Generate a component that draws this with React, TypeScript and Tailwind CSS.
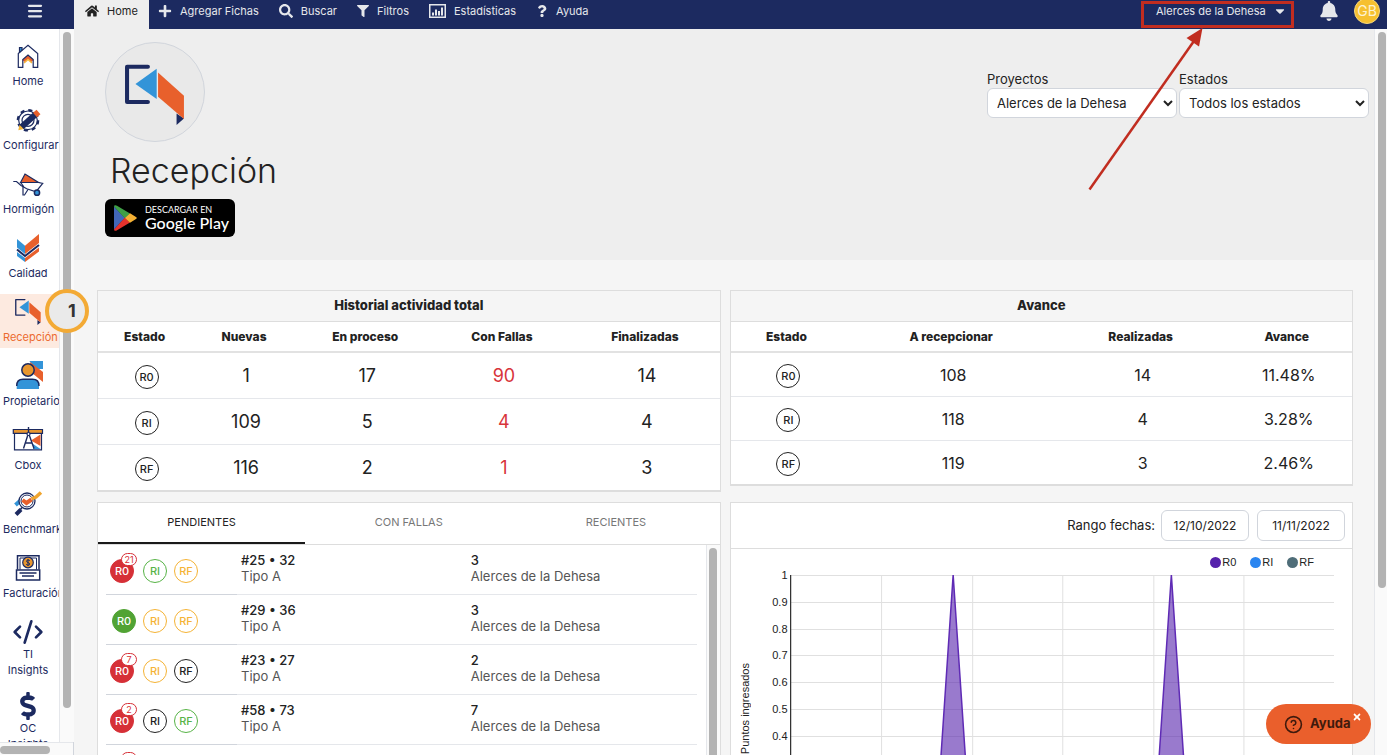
import type { ReactNode } from 'react'
import { CircleHelp, CodeXml, Menu } from 'lucide-react'
import { FaBell, FaCaretDown, FaDollarSign, FaFilter, FaHome, FaPlus, FaQuestion, FaSearch, FaTimes } from 'react-icons/fa'

const NAVY = '#1c2a60'
const ORANGE = '#e8602c'
const BLUE = '#3394d8'
const AMBER = '#e8962e'

interface LogoProps {
  className?: string
  lineWidth: number
}

function RecepcionLogo({ className, lineWidth }: LogoProps) {
  return (
    <svg viewBox="370 190 190 190" className={className} aria-hidden="true">
      <path d="M444 201H382V306H444" fill="none" stroke={NAVY} strokeWidth={lineWidth} strokeLinecap="round" strokeLinejoin="round" />
      <path d="M407 252L470 207V297Z" fill={BLUE} />
      <path d="M529 340L551 355L529 374Z" fill={NAVY} />
      <path d="M474 218L551 287V356L474 290Z" fill={ORANGE} />
    </svg>
  )
}

function BarsIcon() {
  return (
    <svg viewBox="0 0 17 14" className="h-[14px] w-[17px]" fill="currentColor" aria-hidden="true">
      <path d="M0 0H17V14H0ZM1.5 1.5V12.5H15.5V1.5Z" fillRule="evenodd" />
      <path d="M3 8.5H5V11.5H3ZM6 5.5H8V11.5H6ZM9 7H11V11.5H9ZM12 3.5H14V11.5H12Z" />
    </svg>
  )
}

function SideIcon({ children }: { children: ReactNode }) {
  return (
    <svg viewBox="0 0 32 28" className="h-7 w-8 overflow-visible" fill="none" stroke={NAVY} strokeWidth="1.2" aria-hidden="true">
      {children}
    </svg>
  )
}

const sideItems: { label: string; icon: ReactNode; active?: boolean; compact?: boolean }[] = [
  {
    label: 'Home',
    icon: (
      <SideIcon>
        <path d="M7.500 11V5.500H10V8.500" fill={BLUE} />
        <path d="M11.500 19L16 15L20.500 19" stroke={ORANGE} strokeWidth="3" />
        <path d="M12 21L16 17.500L20 21" stroke="#f3b53a" strokeWidth="1.500" />
        <path d="M6.300 25.400V11.500L16 3.200L25.700 11.500V25.400H21.200V17.500L16 13L10.800 17.500V25.400Z" />
      </SideIcon>
    ),
  },
  {
    label: 'Configurar',
    icon: (
      <SideIcon>
        <circle cx="16" cy="14.300" r="10" strokeWidth="2.600" strokeDasharray="4 3.850" />
        <circle cx="16" cy="14.300" r="9.300" fill="white" />
        <circle cx="16" cy="14.300" r="6" />
        <path d="M9.500 21L24 8" stroke={NAVY} strokeWidth="6" />
        <path d="M23 9L26.500 6" stroke={ORANGE} strokeWidth="6" />
        <path d="M7.500 18.700L11.600 23L6.300 24.200Z" fill="#f3b53a" stroke="none" />
      </SideIcon>
    ),
  },
  {
    label: 'Hormigón',
    icon: (
      <SideIcon>
        <path d="M8.700 12.300L13 4L26.500 12.500Z" fill={ORANGE} />
        <path d="M1.300 11.500H4.500L9 15.500L14.700 18.700L24 21.700L30.700 13.300L26.500 12.500H8.700L12 17" />
        <path d="M11 16.500V25H12.500L16 19.500" />
        <circle cx="25" cy="22.700" r="2.600" fill={BLUE} strokeWidth="1.500" />
      </SideIcon>
    ),
  },
  {
    label: 'Calidad',
    icon: (
      <SideIcon>
        <g stroke="none">
          <path d="M5 5L13 11.700V20L5 13.500Z" fill={BLUE} />
          <path d="M13 11.700L27 0V9L13 20Z" fill={ORANGE} />
          <path d="M5 18L13 24V28L5 22Z" fill={BLUE} />
          <path d="M13 24L27 13.500V17.500L13 28Z" fill={ORANGE} />
        </g>
        <path d="M5 15.500L13 22L27 11" strokeWidth="2" />
      </SideIcon>
    ),
  },
  {
    label: 'Recepción',
    icon: <RecepcionLogo className="h-7 w-8" lineWidth={9} />,
    active: true,
  },
  {
    label: 'Propietario',
    icon: (
      <SideIcon>
        <path d="M17.300 -1H31V7H24Z" fill={BLUE} stroke="none" />
        <path d="M18 0L31 10V20L20 11Z" fill={ORANGE} stroke="none" />
        <circle cx="16" cy="8" r="6.200" fill={AMBER} strokeWidth="1.500" />
        <path d="M4.700 27V24C4.700 19 7 17 11 17H20.500C24.500 17 27 19 27 24V27Z" fill={BLUE} stroke="none" />
        <path d="M4.700 24C4.700 19 7 17.300 11 17.300H20.500C24.500 17.300 27 19 27 24" strokeWidth="1.500" />
      </SideIcon>
    ),
  },
  {
    label: 'Cbox',
    icon: (
      <SideIcon>
        <path d="M2.500 7.300V23.800H29.500V7.300" fill="white" />
        <path d="M19 14.500L28.500 8.500V20Z" fill={ORANGE} stroke="none" />
        <path d="M21 23V18L28.500 23Z" fill={BLUE} stroke="none" />
        <path d="M1.300 3.500H30.500V7.300H1.300Z" fill={AMBER} />
        <path d="M16.500 1V7M16.500 7L11.500 22.500M16.500 7L22 22.500M13.300 17H20" strokeWidth="1.400" />
        <circle cx="16.500" cy="8" r="1.500" fill="white" />
      </SideIcon>
    ),
  },
  {
    label: 'Benchmark',
    icon: (
      <SideIcon>
        <path d="M3.500 15L9 10" stroke={BLUE} strokeWidth="4" />
        <circle cx="15" cy="11" r="8" fill="white" strokeWidth="1.300" />
        <circle cx="15" cy="11" r="6" strokeWidth="1" />
        <path d="M10.500 10L14.500 13L19.500 9.500" stroke={ORANGE} strokeWidth="4" />
        <path d="M19.500 9L24 7L29 2.500" stroke="#f0a52f" strokeWidth="3.500" />
        <path d="M10 17.500L8.500 19.500" strokeWidth="1.500" />
        <path d="M9 19.500L4 24.500" strokeWidth="4" />
      </SideIcon>
    ),
  },
  {
    label: 'Facturación',
    icon: (
      <SideIcon>
        <path d="M5.500 15.500V1.800H27V15.500" strokeWidth="1.500" />
        <path d="M8 15.500V4H24.500V15.500" strokeWidth="1" />
        <circle cx="16" cy="8.500" r="5.300" fill={AMBER} />
        <path d="M17.800 6.600C17 5.700 14.500 5.800 14.500 7.200S17.700 8.500 17.700 10 15 11.500 14.200 10.300M16 5V12" strokeWidth="1" />
        <path d="M4.500 16H27.700V26H4.500Z" strokeWidth="1.500" />
        <path d="M7.500 19H24.500M10 22H22" strokeWidth="1.500" />
      </SideIcon>
    ),
  },
  { label: 'TI Insights', icon: <CodeXml className="h-8 w-8" strokeWidth={2} />, compact: true },
  { label: 'OC Insights', icon: <FaDollarSign className="h-7 w-7" />, compact: true },
]

const menuItems = [
  { label: 'Agregar Fichas', icon: <FaPlus className="h-[14px] w-[14px]" /> },
  { label: 'Buscar', icon: <FaSearch className="h-[14px] w-[14px]" /> },
  { label: 'Filtros', icon: <FaFilter className="h-3 w-3" /> },
  { label: 'Estadísticas', icon: <BarsIcon /> },
  { label: 'Ayuda', icon: <FaQuestion className="h-3 w-3" /> },
]

const historial = [
  { estado: 'R0', values: ['1', '17', '90', '14'] },
  { estado: 'RI', values: ['109', '5', '4', '4'] },
  { estado: 'RF', values: ['116', '2', '1', '3'] },
]

const avance = [
  { estado: 'R0', values: ['108', '14', '11.48%'] },
  { estado: 'RI', values: ['118', '4', '3.28%'] },
  { estado: 'RF', values: ['119', '3', '2.46%'] },
]

const badgeTones = {
  black: 'border-[#222] text-[#222]',
  green: 'border-[#57b346] text-[#57b346]',
  amber: 'border-[#f5b335] text-[#f5b335]',
  redFill: 'border-[#d63037] bg-[#d63037] text-white',
  greenFill: 'border-[#51a334] bg-[#51a334] text-white',
}

type Tone = keyof typeof badgeTones

const pendientes: { title: string; piso: string; fallas?: string; tones: [Tone, Tone, Tone] }[] = [
  { title: '#25 • 32', piso: '3', fallas: '21', tones: ['redFill', 'green', 'amber'] },
  { title: '#29 • 36', piso: '3', tones: ['greenFill', 'amber', 'amber'] },
  { title: '#23 • 27', piso: '2', fallas: '7', tones: ['redFill', 'amber', 'black'] },
  { title: '#58 • 73', piso: '7', fallas: '2', tones: ['redFill', 'black', 'green'] },
  { title: '#20 • 24', piso: '1', fallas: '1', tones: ['redFill', 'amber', 'black'] },
]

function Badge({ label, tone = 'black' }: { label: string; tone?: Tone }) {
  return (
    <span className={`inline-flex h-6 w-6 items-center justify-center rounded-full border text-[11px] font-medium ${badgeTones[tone]}`}>
      {label}
    </span>
  )
}

function TopBar() {
  return (
    <header className="flex h-[29px] shrink-0 items-start bg-[#1c2a60] text-[11px] text-gray-200">
      <button className="flex h-[22px] w-[74px] items-center justify-center pr-1" aria-label="Menú">
        <Menu className="h-[18px] w-[18px]" strokeWidth={3} />
      </button>
      <a href="#home" className="flex h-full w-[75px] items-center justify-center gap-2 bg-[#eee] pb-[7px] text-[#222]">
        <FaHome className="h-[14px] w-[14px]" />
        Home
      </a>
      <nav className="flex h-[22px] items-center gap-5 pl-[9px]">
        {menuItems.map((item) => (
          <a key={item.label} href="#menu" className="flex items-center gap-2 whitespace-nowrap">
            {item.icon}
            {item.label}
          </a>
        ))}
      </nav>
      <div className="ml-auto flex items-start pr-[7px]">
        <div className="relative mt-px">
          <button className="flex h-[27px] w-[153px] items-center justify-between whitespace-nowrap border-[3px] border-[#c12d20] pr-1 pb-[7px] pl-3">
            Alerces de la Dehesa
            <FaCaretDown className="h-[14px] w-[14px]" />
          </button>
          {/* Arrow pointing at the project switcher */}
          <svg viewBox="0 0 120 164" className="pointer-events-none absolute top-[27px] -left-14 z-20 h-[164px] w-[120px]" aria-hidden="true">
            <path d="M4.500 161.500L109 13" stroke="#c12d20" strokeWidth="2.500" />
            <path d="M117.500 0L101.500 10L114 18.500Z" fill="#c12d20" />
          </svg>
        </div>
        <button className="ml-6 flex h-[22px] items-center" aria-label="Notificaciones">
          <FaBell className="h-5 w-[22px]" />
        </button>
        <div className="-mt-[2px] ml-[14px] flex h-[26px] w-[26px] items-center justify-center rounded-full border border-[#f9d97a] bg-[#f6c02f] text-sm text-[#fdf3d0]">
          GB
        </div>
      </div>
    </header>
  )
}

function Sidebar() {
  return (
    <aside className="flex w-[74px] shrink-0 flex-col border-r border-gray-300 bg-white text-[#1c2a60]">
      <div className="flex min-h-0 flex-1">
        <nav className="flex w-[60px] shrink-0 flex-col gap-[10px] overflow-hidden border-r border-gray-200 pt-[9px]">
          {sideItems.map((item) => (
            <a
              key={item.label}
              href="#modulo"
              className={`block shrink-0 pt-1 pr-[6px] pl-[3px] text-center text-[11px] leading-4 ${
                item.active ? 'bg-[#fdeae0] text-[#ec6a30]' : ''
              } ${item.compact ? '' : 'h-[54px] whitespace-nowrap'}`}
            >
              <span className="flex h-7 items-center justify-center">{item.icon}</span>
              <span className={item.compact ? 'block px-1' : 'mt-[3px] block'}>{item.label}</span>
            </a>
          ))}
        </nav>
        <div className="flex-1 bg-[#fafafa] px-[3px] pt-[3px] pb-[34px]">
          <div className="h-full w-2 rounded-full bg-[#b3b3b3]" />
        </div>
      </div>
      <div className="h-[13px] shrink-0 border-t border-gray-200 bg-[#fafafa] pt-[3px]">
        <div className="h-2 w-[50px] rounded-full bg-[#b3b3b3]" />
      </div>
    </aside>
  )
}

function Hero() {
  const selectClass = 'h-[30px] w-[190px] rounded-md border border-gray-300 bg-white px-[5px] text-[13px] text-[#222]'

  return (
    <section className="flex h-[231px] items-start justify-between bg-[#eee] pt-[13px] pr-[5px] pl-[31px]">
      <div>
        <div className="flex h-[100px] w-[100px] items-center justify-center rounded-full border border-gray-300 bg-[#e9e9e9] pt-[5px]">
          <RecepcionLogo className="h-16 w-16" lineWidth={12} />
        </div>
        <h1 className="pl-[5px] text-[34px] leading-[57px] font-light text-[#222]">Recepción</h1>
        <a href="#play" className="flex h-[38px] w-[130px] items-center gap-2 rounded-md bg-black pl-2 text-white">
          <svg viewBox="0 0 24 26" className="h-[26px] w-6 shrink-0" aria-hidden="true">
            <path d="M1 1.500V24.500L12 13Z" fill="#4267b8" />
            <path d="M1 1.500C1 0 3 0 4 .8L17 8.500L12 13.500Z" fill="#3f9f46" />
            <path d="M1 24.500C1 26 3 26 4 25.200L17 17.500L12 12.500Z" fill="#e5322c" />
            <path d="M17 8.300L23 12C24 12.600 24 13.400 23 14L17 17.700L12 13Z" fill="#f4b034" />
          </svg>
          <span className="whitespace-nowrap font-['Lato',sans-serif]">
            <span className="block text-[9px] leading-[9px]">DESCARGAR EN</span>
            <span className="block text-base leading-[18px] font-medium">Google Play</span>
          </span>
        </a>
      </div>
      <div className="flex gap-[2px] pt-7 text-[13px] leading-[18px] text-[#222]">
        <div>
          <label htmlFor="proyectos" className="block">Proyectos</label>
          <select id="proyectos" className={selectClass}>
            <option>Alerces de la Dehesa</option>
          </select>
        </div>
        <div>
          <label htmlFor="estados" className="block">Estados</label>
          <select id="estados" className={selectClass}>
            <option>Todos los estados</option>
          </select>
        </div>
      </div>
    </section>
  )
}

interface SummaryProps {
  title: string
  columns: { label: string; width: string }[]
  rows: { estado: string; values: string[] }[]
  rowClass: string
  alertColumn?: number
}

function SummaryTable({ title, columns, rows, rowClass, alertColumn }: SummaryProps) {
  return (
    <div className="self-start border border-b-2 border-[#ddd] bg-white">
      <table className="w-full table-fixed text-center text-[#222]">
        <caption className="h-[31px] border-b border-[#ddd] bg-[#f5f5f5] text-[13px] leading-[28px] font-extrabold">{title}</caption>
        <thead>
          <tr className="h-[30px] border-b-2 border-[#e2e2e2] text-xs">
            {columns.map((column) => (
              <th key={column.label} className={`font-extrabold ${column.width}`}>{column.label}</th>
            ))}
          </tr>
        </thead>
        <tbody>
          {rows.map((row) => (
            <tr key={row.estado} className={`border-b border-gray-200 last:border-b-0 ${rowClass}`}>
              <td className="pt-1 pl-1 leading-none">
                <Badge label={row.estado} />
              </td>
              {row.values.map((value, i) => (
                <td key={i} className={`pt-[2px] pl-1 ${i === alertColumn ? 'text-[#d8343b]' : ''}`}>{value}</td>
              ))}
            </tr>
          ))}
        </tbody>
      </table>
    </div>
  )
}

function PendingList() {
  return (
    <div className="flex min-h-0 flex-col border border-b-0 border-[#ddd] bg-white">
      <div className="flex h-[42px] shrink-0 border-b border-[#ddd] text-[11px] text-[#777]">
        <button className="flex-1 border-b-2 border-[#1a1a1a] text-[#222]">PENDIENTES</button>
        <button className="flex-1 border-b-2 border-transparent">CON FALLAS</button>
        <button className="flex-1 border-b-2 border-transparent">RECIENTES</button>
      </div>
      <div className="flex min-h-0 flex-1">
        <ul className="min-w-0 flex-1 overflow-hidden pr-[9px] pl-2 text-[13px] leading-4 text-[#555]">
          {pendientes.map((item) => (
            <li key={item.title} className="grid h-[50px] grid-cols-[131px_1fr_1fr] last:h-12">
              <div className="flex items-center gap-[7px] border-b border-gray-300 pt-[3px] pl-1">
                <span className={`relative flex w-[26px] ${item.fallas ? '' : 'pl-[2px]'}`}>
                  <Badge label="R0" tone={item.tones[0]} />
                  {item.fallas && (
                    <span className="absolute -top-[6px] -right-[1px] flex h-[13px] w-4 items-center justify-center rounded-full border border-[#d63037] bg-white text-[9px] leading-none text-[#d63037]">
                      {item.fallas}
                    </span>
                  )}
                </span>
                <Badge label="RI" tone={item.tones[1]} />
                <Badge label="RF" tone={item.tones[2]} />
              </div>
              <div className="border-b border-gray-200 pt-[7px] pl-1">
                <p className="font-medium text-[#222]">{item.title}</p>
                <p>Tipo A</p>
              </div>
              <div className="border-b border-gray-200 pt-[7px] pl-1">
                <p className="font-medium text-[#222]">{item.piso}</p>
                <p>Alerces de la Dehesa</p>
              </div>
            </li>
          ))}
        </ul>
        <div className="w-[14px] shrink-0 overflow-hidden border-l border-gray-200 bg-[#fafafa] px-[2px] pt-[3px]">
          <div className="h-[400px] w-2 rounded-full bg-[#b3b3b3]" />
        </div>
      </div>
    </div>
  )
}

const ticks = ['1', '0.9', '0.8', '0.7', '0.6', '0.5', '0.4', '0.3', '0.2', '0.1', '0']
const gridX = [91, 182, 272, 363, 453]
const peaks = [163, 381]

const legend = [
  { label: 'R0', color: 'bg-[#5521ab]' },
  { label: 'RI', color: 'bg-[#2a85f0]' },
  { label: 'RF', color: 'bg-[#4f6d78]' },
]

function ChartCard() {
  const inputClass = 'h-[31px] w-[88px] rounded-md border border-gray-300 bg-white text-center text-xs text-[#222]'

  return (
    <div className="flex min-h-0 flex-col overflow-hidden border border-b-0 border-[#ddd] bg-white">
      <div className="flex h-[46px] shrink-0 items-center justify-end border-b border-[#ddd] pr-[7px] text-[13px] text-[#222]">
        <label htmlFor="desde">Rango fechas:</label>
        <input id="desde" type="text" defaultValue="12/10/2022" className={`ml-[6px] ${inputClass}`} />
        <input type="text" aria-label="Hasta" defaultValue="11/11/2022" className={`ml-2 ${inputClass}`} />
      </div>
      <div className="shrink-0 font-['Liberation_Sans',Arial,sans-serif] text-[11px] text-[#222]">
        <ul className="flex h-[19px] items-end justify-end gap-[14px] pr-[38px] leading-3">
          {legend.map((item) => (
            <li key={item.label} className="flex items-center gap-px">
              <span className={`h-[11px] w-[11px] rounded-full ${item.color}`} />
              {item.label}
            </li>
          ))}
        </ul>
        <div className="flex items-center pt-px pr-[18px] pl-[7px]">
          <span className="rotate-180 leading-[14px] [writing-mode:vertical-rl]">Puntos ingresados</span>
          <div className="flex h-[280px] w-9 flex-col justify-between text-right leading-3">
            {ticks.map((tick) => (
              <span key={tick}>{tick}</span>
            ))}
          </div>
          <svg viewBox="0 0 544 268" preserveAspectRatio="none" className="ml-[2px] h-[268px] min-w-0 flex-1" aria-hidden="true">
            {ticks.map((tick, i) => (
              <path key={tick} d={`M0 ${Math.round(i * 26.8) + 0.5}H544`} stroke="#e0e0e0" />
            ))}
            {gridX.map((x) => (
              <path key={x} d={`M${x + 0.5} 0V268`} stroke="#e0e0e0" />
            ))}
            <path d="M0.500 0V268" stroke="#333" strokeWidth="1.500" />
            {peaks.map((x) => (
              <path key={x} d={`M${x - 18} 268L${x} 0L${x + 18} 268`} fill="#5521ab" fillOpacity="0.6" stroke="#5f2bb5" strokeWidth="1.500" />
            ))}
          </svg>
        </div>
      </div>
    </div>
  )
}

export default function App() {
  return (
    <div className="relative flex h-screen flex-col overflow-hidden bg-[#f5f5f5] font-['Inter',sans-serif]">
      <TopBar />
      <div className="relative flex min-h-0 flex-1">
        <Sidebar />
        <main className="flex min-w-0 flex-1 flex-col">
          <Hero />
          <div className="grid min-h-0 flex-1 grid-cols-2 grid-rows-[auto_1fr] gap-x-[9px] gap-y-[10px] pt-[30px] pr-[21px] pl-[23px]">
            <SummaryTable
              title="Historial actividad total"
              columns={[
                { label: 'Estado', width: 'w-[15%]' },
                { label: 'Nuevas', width: 'w-[17%]' },
                { label: 'En proceso', width: 'w-[22%]' },
                { label: 'Con Fallas', width: 'w-[22%]' },
                { label: 'Finalizadas', width: 'w-[24%]' },
              ]}
              rows={historial}
              rowClass="h-[46px] text-lg"
              alertColumn={2}
            />
            <SummaryTable
              title="Avance"
              columns={[
                { label: 'Estado', width: 'w-[18%]' },
                { label: 'A recepcionar', width: 'w-[35%]' },
                { label: 'Realizadas', width: 'w-[26%]' },
                { label: 'Avance', width: 'w-[21%]' },
              ]}
              rows={avance}
              rowClass="h-[44px] text-base"
            />
            <PendingList />
            <ChartCard />
          </div>
        </main>
        <div className="w-[13px] shrink-0 border-l border-gray-200 bg-[#fafafa] px-[3px] pt-[3px] pb-[167px]">
          <div className="h-full w-2 rounded-full bg-[#b3b3b3]" />
        </div>

        {/* Step marker */}
        <div className="absolute top-[260px] left-[45px] flex h-11 w-11 items-center justify-center rounded-full border-4 border-[#f3aa35] bg-[#eaeaea] pl-[10px] text-lg font-bold text-[#333]">
          1
        </div>
      </div>

      {/* Help button */}
      <div className="absolute right-4 bottom-[11px]">
        <button className="flex h-10 w-[105px] items-center gap-[7px] rounded-full bg-[#ea5f2c] pl-[18px] text-[13px] font-bold text-[#3f1a0d]">
          <CircleHelp className="h-[19px] w-[19px] shrink-0" />
          Ayuda
        </button>
        <button className="absolute top-2 right-[9px] text-white" aria-label="Cerrar">
          <FaTimes className="h-[10px] w-[10px]" />
        </button>
      </div>
    </div>
  )
}
